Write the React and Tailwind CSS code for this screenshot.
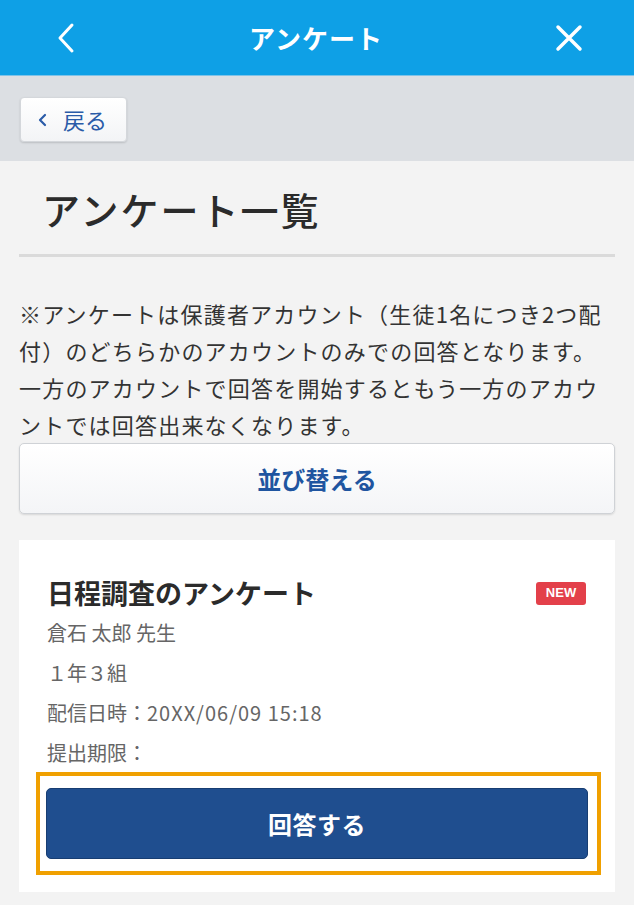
const jp = { fontFamily: '"Noto Sans CJK JP", "Noto Sans", sans-serif' };

export default function App() {
  return (
    <div className="min-h-[905px] bg-[#f3f3f3] text-[#333]" style={jp}>
      <header className="h-[76px] bg-[#0ea0e6] border-b border-[#7fc3e8] flex items-center justify-between pl-[54px] pr-[50px]">
        <svg width="24" height="32" viewBox="0 0 24 32">
          <path d="M18 3 L6 16 L18 29" fill="none" stroke="#fff" strokeWidth="3" strokeLinecap="round" strokeLinejoin="round" />
        </svg>
        <h1 className="text-[26px] font-bold text-white tracking-[1px]">アンケート</h1>
        <svg width="30" height="30" viewBox="0 0 30 30">
          <path d="M4 4 L26 26 M26 4 L4 26" fill="none" stroke="#fff" strokeWidth="3.5" strokeLinecap="round" />
        </svg>
      </header>

      <div className="h-[85px] bg-[#dcdfe3] pl-[20px] pt-[21px]">
        <button
          type="button"
          className="h-[45px] w-[107px] rounded-[4px] bg-gradient-to-b from-white to-[#f3f4f6] border border-[#d4d7db] shadow-[0_1px_2px_rgba(0,0,0,0.15)] flex items-center pl-[17px] gap-[16px] text-[#2a5ba8] text-[22px]"
        >
          <svg width="9" height="16" viewBox="0 0 9 16">
            <path d="M7 3 L2 8 L7 13" fill="none" stroke="#2a5ba8" strokeWidth="2.2" strokeLinecap="round" strokeLinejoin="round" />
          </svg>
          <span>戻る</span>
        </button>
      </div>

      <main className="px-[19px]">
        <h2 className="pt-[23px] pl-[23px] text-[38px] font-medium text-[#2b2b2b] tracking-[2px] leading-[50px] pb-[20px] border-b-[3px] border-[#dadada]">
          アンケート一覧
        </h2>

        <p className="mt-[38px] text-[22px] leading-[37px] text-[#333] tracking-[1.2px]">
          ※アンケートは保護者アカウント（生徒1名につき2つ配付）のどちらかのアカウントのみでの回答となります。一方のアカウントで回答を開始するともう一方のアカウントでは回答出来なくなります。
        </p>

        <button
          type="button"
          className="h-[71px] w-full rounded-[5px] bg-gradient-to-b from-white to-[#f4f5f7] border border-[#cfd2d6] shadow-[0_1px_2px_rgba(0,0,0,0.12)] text-[24px] font-bold text-[#1f55a0]"
        >
          並び替える
        </button>

        <section className="mt-[26px] bg-white px-[28px] pt-[35px] pb-[17px]">
          <div className="flex items-center justify-between">
            <h3 className="text-[27px] font-bold text-[#2b2b2b] leading-[36px]">日程調査のアンケート</h3>
            <span
              className="mr-[1px] h-[23px] w-[50px] rounded-[3px] bg-[#e3404a] text-white text-[13px] font-bold flex items-center justify-center"
              style={{ fontFamily: '"Liberation Sans", Arial, sans-serif' }}
            >
              NEW
            </span>
          </div>
          <div className="mt-[2px] text-[20px] text-[#666] leading-[40px]">
            <p>倉石 太郎 先生</p>
            <p>１年３組</p>
            <p>
              配信日時：<span className="tracking-[1px]">20XX/06/09 15:18</span>
            </p>
            <p>提出期限：</p>
          </div>
          <div className="-mt-[1px] -ml-[11px] -mr-[14px] border-[4px] border-[#f0a000] pl-[6px] pr-[9px] py-[12px]">
            <button
              type="button"
              className="h-[71px] w-full rounded-[5px] bg-[#1f4e8f] border border-[#173d72] text-white text-[24px] tracking-[0.5px] font-bold"
            >
              回答する
            </button>
          </div>
        </section>
      </main>
    </div>
  );
}
